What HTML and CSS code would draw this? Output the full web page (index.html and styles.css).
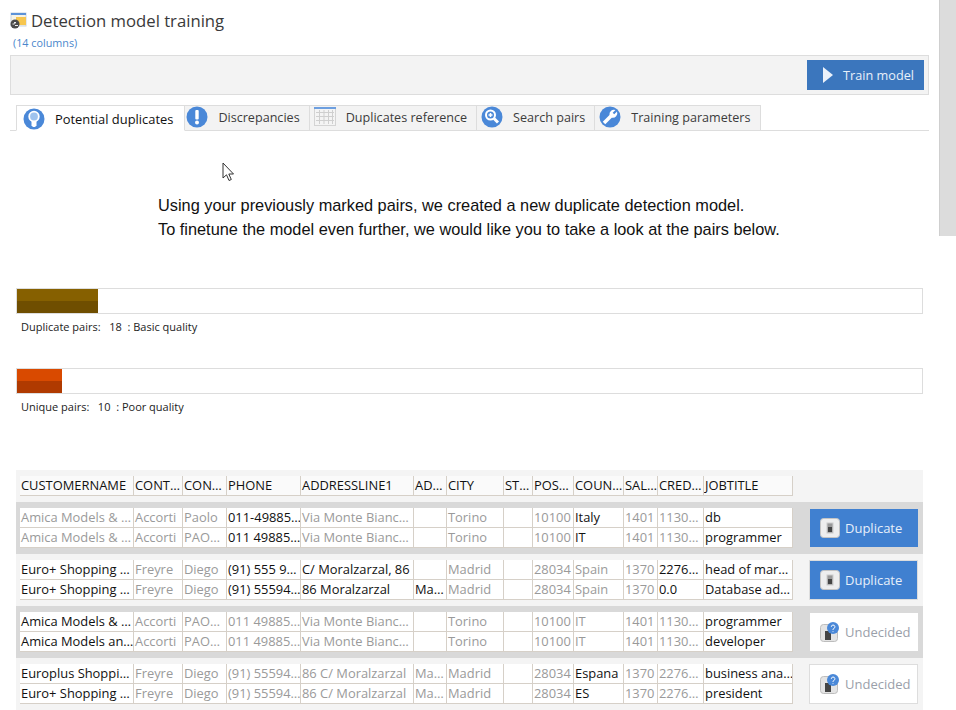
FILE: index.html
```html
<!DOCTYPE html>
<html lang="en">
<head>
<meta charset="UTF-8" />
<meta name="viewport" content="width=device-width, initial-scale=1" />
<title>Detection model training</title>
<link rel="stylesheet" href="styles.css">
</head>
<body>

<div class="page">
  <div class="title">
    <svg class="title-icon" width="17" height="18" viewBox="0 0 17 18">
      <rect x="1" y="1" width="15" height="13" fill="#f6f3e6" stroke="#c9d3e0"/>
      <rect x="1" y="1" width="15" height="2" fill="#5c92d8"/>
      <rect x="6" y="5" width="10" height="8" fill="#f7c64f"/>
      <circle cx="5" cy="12" r="4.500" fill="#4a4a4a"/>
      <path d="M2.500 12h2l1-1.500M5 13.500h3M4 10.500h2" stroke="#eee" fill="none"/>
    </svg>
    <h1>Detection model training</h1>
  </div>
  <div class="subtitle">(14 columns)</div>

  <div class="toolbar">
    <button class="train-btn">
      <svg width="10" height="16" viewBox="0 0 10 16"><path d="M0 0L10 8L0 16Z" fill="#eaf1fa"/></svg>
      Train model
    </button>
  </div>

  <div class="tabs">
    <div class="tab active">
      <svg class="tab-icon" width="22" height="22" viewBox="0 0 22 22">
        <circle cx="11" cy="11" r="10.500" fill="#4a88d8"/>
        <circle cx="11" cy="8.500" r="4.800" fill="#9fc3ee" stroke="#fff" stroke-width="1.800"/>
        <path d="M8.500 13h5v4.500l-1.500 1.500h-2L8.500 17.500z" fill="#fff"/>
      </svg>
      Potential duplicates
    </div>
    <div class="tab">
      <svg class="tab-icon" width="22" height="22" viewBox="0 0 22 22">
        <circle cx="11" cy="11" r="10.500" fill="#4a88d8"/>
        <rect x="9.300" y="4" width="3.400" height="9.500" rx="1" fill="#fff"/>
        <circle cx="11" cy="16.500" r="2" fill="#fff"/>
      </svg>
      Discrepancies
    </div>
    <div class="tab">
      <svg class="tab-icon" width="22" height="20" viewBox="0 0 22 20">
        <rect x="0.500" y="0.500" width="21" height="18" fill="#f4f4f4" stroke="#d4d4d4"/>
        <rect x="0" y="0" width="22" height="2" fill="#6d9fe0"/>
        <path d="M2 5.500h18M2 9.500h18M2 13.500h18M5.500 3v14M10 3v14M14.500 3v14M18.500 3v14" stroke="#cfcfcf" fill="none"/>
      </svg>
      Duplicates reference
    </div>
    <div class="tab">
      <svg class="tab-icon" width="22" height="22" viewBox="0 0 22 22">
        <circle cx="11" cy="11" r="10.500" fill="#4a88d8"/>
        <circle cx="9.500" cy="9" r="4.500" fill="none" stroke="#fff" stroke-width="2"/>
        <path d="M7.500 9h4M9.500 7v4" stroke="#fff" stroke-width="1.500"/>
        <path d="M13 12.500l4 4" stroke="#fff" stroke-width="3"/>
      </svg>
      Search pairs
    </div>
    <div class="tab">
      <svg class="tab-icon" width="22" height="22" viewBox="0 0 22 22">
        <circle cx="11" cy="11" r="10.500" fill="#4a88d8"/>
        <path d="M5 17L12 10" stroke="#fff" stroke-width="3.500"/>
        <path d="M10.500 9a4.500 4.500 0 0 1 6-5l-2.800 2.800 1.500 1.500L18 5.500a4.500 4.500 0 0 1-5.500 6z" fill="#fff"/>
      </svg>
      Training parameters
    </div>
  </div>

  <svg class="cursor" width="14" height="20" viewBox="0 0 14 20">
    <path d="M1 1V16L4.500 12.800L7 18.500L9.300 17.500L6.800 12H11.500Z" fill="#fff" stroke="#333"/>
  </svg>

  <div class="intro">
    Using your previously marked pairs, we created a new duplicate detection model.<br>
    To finetune the model even further, we would like you to take a look at the pairs below.
  </div>

  <div class="progress first">
    <div class="fill fill-basic"></div>
  </div>
  <div class="progress-label">Duplicate pairs: &nbsp;&nbsp;18 &nbsp;: Basic quality</div>

  <div class="progress">
    <div class="fill fill-poor"></div>
  </div>
  <div class="progress-label">Unique pairs: &nbsp;&nbsp;10 &nbsp;: Poor quality</div>

  <div class="pairs">
    <div class="pair-head">
      <table class="grid">
        <tr>
          <th>CUSTOMERNAME</th><th>CONT…</th><th>CON…</th><th>PHONE</th><th>ADDRESSLINE1</th><th>AD…</th><th>CITY</th><th>ST…</th><th>POS…</th><th>COUN…</th><th>SAL…</th><th>CRED…</th><th>JOBTITLE</th>
        </tr>
      </table>
    </div>

    <div class="pair dark">
      <table class="grid">
        <tr class="muted">
          <td>Amica Models &amp; …</td><td>Accorti</td><td>Paolo</td><td class="diff">011-49885…</td><td>Via Monte Bianc…</td><td></td><td>Torino</td><td></td><td>10100</td><td class="diff">Italy</td><td>1401</td><td>1130…</td><td class="diff">db</td>
        </tr>
        <tr class="muted">
          <td>Amica Models &amp; …</td><td>Accorti</td><td>PAO…</td><td class="diff">011 49885…</td><td>Via Monte Bianc…</td><td></td><td>Torino</td><td></td><td>10100</td><td class="diff">IT</td><td>1401</td><td>1130…</td><td class="diff">programmer</td>
        </tr>
      </table>
      <button class="mark on">
        <svg class="switch" width="20" height="20" viewBox="0 0 20 20">
          <rect x="0.500" y="0.500" width="19" height="19" rx="3" fill="#eeeeee" stroke="#c4c4c4"/>
          <rect x="7" y="5" width="6" height="10" fill="#999" stroke="#ccc"/>
          <rect x="8" y="9" width="4" height="5" fill="#444"/>
        </svg>
        Duplicate
      </button>
    </div>

    <div class="pair">
      <table class="grid">
        <tr class="muted">
          <td class="diff">Euro+ Shopping …</td><td>Freyre</td><td>Diego</td><td class="diff">(91) 555 9…</td><td class="diff">C/ Moralzarzal, 86</td><td></td><td>Madrid</td><td></td><td>28034</td><td>Spain</td><td>1370</td><td class="diff">2276…</td><td class="diff">head of mar…</td>
        </tr>
        <tr class="muted">
          <td class="diff">Euro+ Shopping …</td><td>Freyre</td><td>Diego</td><td class="diff">(91) 55594…</td><td class="diff">86 Moralzarzal</td><td class="diff">Ma…</td><td>Madrid</td><td></td><td>28034</td><td>Spain</td><td>1370</td><td class="diff">0.0</td><td class="diff">Database ad…</td>
        </tr>
      </table>
      <button class="mark on outlined">
        <svg class="switch" width="20" height="20" viewBox="0 0 20 20">
          <rect x="0.500" y="0.500" width="19" height="19" rx="3" fill="#eeeeee" stroke="#c4c4c4"/>
          <rect x="7" y="5" width="6" height="10" fill="#999" stroke="#ccc"/>
          <rect x="8" y="9" width="4" height="5" fill="#444"/>
        </svg>
        Duplicate
      </button>
    </div>

    <div class="pair dark">
      <table class="grid">
        <tr class="muted">
          <td class="diff">Amica Models &amp; …</td><td>Accorti</td><td>PAO…</td><td>011 49885…</td><td>Via Monte Bianc…</td><td></td><td>Torino</td><td></td><td>10100</td><td>IT</td><td>1401</td><td>1130…</td><td class="diff">programmer</td>
        </tr>
        <tr class="muted">
          <td class="diff">Amica Models an…</td><td>Accorti</td><td>PAO…</td><td>011 49885…</td><td>Via Monte Bianc…</td><td></td><td>Torino</td><td></td><td>10100</td><td>IT</td><td>1401</td><td>1130…</td><td class="diff">developer</td>
        </tr>
      </table>
      <button class="mark">
        <svg class="switch" width="20" height="20" viewBox="0 0 20 20">
          <rect x="0.500" y="2.500" width="17" height="17" rx="3" fill="#e4e4e4" stroke="#bdbdbd"/>
          <rect x="5" y="9" width="6" height="9" fill="#444"/>
          <circle cx="13" cy="6" r="6" fill="#4a88d8"/>
          <path d="M11.300 4.800a1.800 1.800 0 1 1 2.500 1.700l-.8.700v.8M13 9.300v.8" stroke="#fff" fill="none"/>
        </svg>
        Undecided
      </button>
    </div>

    <div class="pair">
      <table class="grid">
        <tr class="muted">
          <td class="diff">Europlus Shoppi…</td><td>Freyre</td><td>Diego</td><td>(91) 55594…</td><td>86 C/ Moralzarzal</td><td>Ma…</td><td>Madrid</td><td></td><td>28034</td><td class="diff">Espana</td><td>1370</td><td>2276…</td><td class="diff">business ana…</td>
        </tr>
        <tr class="muted">
          <td class="diff">Euro+ Shopping …</td><td>Freyre</td><td>Diego</td><td>(91) 55594…</td><td>86 C/ Moralzarzal</td><td>Ma…</td><td>Madrid</td><td></td><td>28034</td><td class="diff">ES</td><td>1370</td><td>2276…</td><td class="diff">president</td>
        </tr>
      </table>
      <button class="mark outlined">
        <svg class="switch" width="20" height="20" viewBox="0 0 20 20">
          <rect x="0.500" y="2.500" width="17" height="17" rx="3" fill="#e4e4e4" stroke="#bdbdbd"/>
          <rect x="5" y="9" width="6" height="9" fill="#444"/>
          <circle cx="13" cy="6" r="6" fill="#4a88d8"/>
          <path d="M11.300 4.800a1.800 1.800 0 1 1 2.500 1.700l-.8.700v.8M13 9.300v.8" stroke="#fff" fill="none"/>
        </svg>
        Undecided
      </button>
    </div>
  </div>
</div>

<div class="scrollbar"><div class="thumb"></div></div>

</body>
</html>
```

FILE: styles.css
```css
html, body {
  height: 710px;
  overflow: hidden;
}
body {
  margin: 0;
  display: flex;
  background: white;
  font-family: "Open Sans", Arial, sans-serif;
  color: #222;
}
.page {
  width: 939px;
  height: 710px;
  overflow: hidden;
  padding-left: 10px;
  padding-right: 10px;
  box-sizing: border-box;
  position: relative;
}
.scrollbar {
  width: 17px;
  height: 710px;
  background: white;
}
.thumb {
  height: 236px;
  background: #dcdcdc;
  border-left: 1px solid #cfcfcf;
}
.title {
  display: flex;
  align-items: center;
  height: 20px;
  margin-top: 10px;
}
.title-icon {
  flex: none;
  margin: 2px 4px 0 0;
}
h1 {
  margin: 0;
  font-size: 16.700px;
  font-weight: normal;
  color: #3a3a3a;
}
.subtitle {
  margin: 6px 0 0 3px;
  height: 19px;
  font-size: 10.800px;
  line-height: 14px;
  color: #4a86cc;
}
.toolbar {
  display: flex;
  justify-content: flex-end;
  align-items: center;
  height: 38px;
  padding-right: 4px;
  background: #f3f3f3;
  border: 1px solid #ddd;
}
.train-btn {
  display: flex;
  align-items: center;
  width: 117px;
  height: 30px;
  padding: 0 0 0 16px;
  gap: 10px;
  border: none;
  background: #3b76bd;
  color: #e8f0fa;
  font-family: inherit;
  font-size: 12.700px;
}
.tabs {
  display: flex;
  align-items: flex-end;
  height: 26px;
  margin-top: 9px;
  padding-left: 6px;
  border-bottom: 1px solid #ddd;
}
.tab {
  display: flex;
  align-items: center;
  box-sizing: border-box;
  height: 26px;
  padding: 0 9px 2px 4px;
  gap: 10px;
  margin-bottom: -1px;
  background: #f3f3f3;
  border: 1px solid #ddd;
  border-left: none;
  font-size: 12.600px;
  color: #3c3c3c;
}
.tab.active {
  padding: 2px 11px 0 6px;
  background: white;
  border-left: 1px solid #ddd;
  border-bottom-color: white;
  font-size: 12.900px;
  color: #111;
}
.tab.active + .tab {
  padding-left: 1px;
}
.tab-icon {
  flex: none;
}
.cursor {
  position: absolute;
  left: 222px;
  top: 162px;
}
.intro {
  margin: 62px 0 0 148px;
  font-family: "Liberation Sans", Arial, sans-serif;
  font-size: 16.340px;
  line-height: 24px;
  color: #111;
}
.progress {
  height: 24px;
  margin: 34px 6px 0;
  border: 1px solid #ddd;
  background: white;
}
.progress.first {
  margin-top: 47px;
}
.fill {
  height: 100%;
}
.fill-basic {
  width: 81px;
  background: linear-gradient(#866000 50%, #6f4e00 50%);
}
.fill-poor {
  width: 45px;
  background: linear-gradient(#d94a00 50%, #b03a00 50%);
}
.progress-label {
  margin: 5px 0 0 11px;
  height: 15px;
  font-size: 11px;
  line-height: 15px;
  color: #222;
}
.pairs {
  margin: 56px 6px 0;
  background: #f4f4f4;
}
.pair-head {
  padding: 6px 0 6px 4px;
}
.pair {
  display: flex;
  align-items: center;
  height: 52px;
  box-sizing: border-box;
  padding: 0 5px 0 4px;
}
.pair.dark {
  background: #d9d9d9;
}
.grid {
  width: 773px;
  flex: none;
  table-layout: fixed;
  border-collapse: separate;
  border-spacing: 0;
  background: white;
  font-size: 12.900px;
}
.pair-head .grid {
  background: #fafafa;
}
.grid th, .grid td {
  box-sizing: border-box;
  height: 20px;
  padding: 0 0 1px 1px;
  border-right: 1px solid #d6d0c8;
  border-bottom: 1px solid #d6d0c8;
  font-weight: normal;
  line-height: 18px;
  text-align: left;
  white-space: nowrap;
  overflow: hidden;
  color: #111;
}
.grid th:nth-child(1), .grid td:nth-child(1) { width: 114px; }
.grid th:nth-child(2), .grid td:nth-child(2) { width: 49px; }
.grid th:nth-child(3), .grid td:nth-child(3) { width: 44px; }
.grid th:nth-child(4), .grid td:nth-child(4) { width: 74px; }
.grid th:nth-child(5), .grid td:nth-child(5) { width: 113px; }
.grid th:nth-child(6), .grid td:nth-child(6) { width: 33px; }
.grid th:nth-child(7), .grid td:nth-child(7) { width: 57px; }
.grid th:nth-child(8), .grid td:nth-child(8) { width: 29px; }
.grid th:nth-child(9), .grid td:nth-child(9) { width: 41px; }
.grid th:nth-child(10), .grid td:nth-child(10) { width: 50px; }
.grid th:nth-child(11), .grid td:nth-child(11) { width: 34px; }
.grid th:nth-child(12), .grid td:nth-child(12) { width: 46px; }
.grid th:nth-child(13), .grid td:nth-child(13) { width: 89px; }
.muted td {
  color: #9a9a9a;
}
.muted td.diff {
  color: #111;
}
.mark {
  display: flex;
  align-items: center;
  box-sizing: border-box;
  width: 108px;
  height: 38px;
  margin-left: 17px;
  padding: 0 0 0 10px;
  gap: 5px;
  border: none;
  background: white;
  color: #9aa0aa;
  font-family: inherit;
  font-size: 13px;
}
.mark.on {
  background: #4080d0;
  color: #e6effa;
}
.mark.outlined {
  width: 110px;
  height: 40px;
  margin-left: 16px;
  padding-left: 10px;
  border: 1px solid #ddd;
}
```
